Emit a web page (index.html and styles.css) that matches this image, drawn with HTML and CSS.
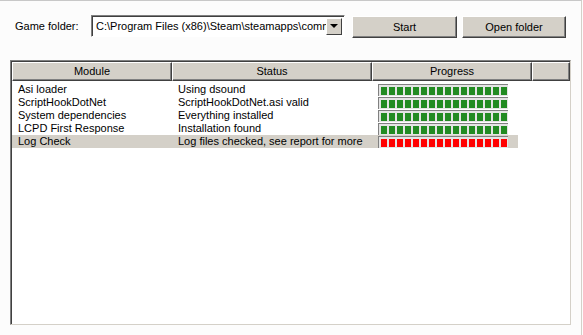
FILE: index.html
```html
<!DOCTYPE html>
<html lang="en">
<head>
    <meta charset="UTF-8">
    <title>Installer check</title>
    <link rel="stylesheet" href="styles.css">
</head>
<body>
    <div class="window">
        <div class="toolbar">
            <span class="label">Game folder:</span>
            <div class="combo">
                <span class="combo-text">C:\Program Files (x86)\Steam\steamapps\common</span>
                <span class="combo-btn"><span class="arrow"></span></span>
            </div>
            <button class="btn btn-start">Start</button>
            <button class="btn btn-open">Open folder</button>
        </div>

        <div class="listview">
            <div class="header">
                <div class="hcell">Module</div>
                <div class="hcell">Status</div>
                <div class="hcell">Progress</div>
                <div class="hcell"></div>
            </div>
            <div id="rows"></div>
        </div>
    </div>

<script>
// Lista de módulos verificados
var modules = [
    { name: 'Asi loader', status: 'Using dsound', ok: true },
    { name: 'ScriptHookDotNet', status: 'ScriptHookDotNet.asi valid', ok: true },
    { name: 'System dependencies', status: 'Everything installed', ok: true },
    { name: 'LCPD First Response', status: 'Installation found', ok: true },
    { name: 'Log Check', status: 'Log files checked, see report for more', ok: false }
];

function createBar(ok) {
    var bar = document.createElement('div');
    bar.className = 'bar';
    for (var i = 0; i < 16; i++) {
        var seg = document.createElement('span');
        seg.className = ok ? 'seg seg-green' : 'seg seg-red';
        bar.appendChild(seg);
    }
    return bar;
}

var rowsDiv = document.getElementById('rows');
modules.forEach(function (m) {
    var row = document.createElement('div');
    row.className = m.ok ? 'row' : 'row row-selected';
    var c1 = document.createElement('div');
    c1.className = 'cell';
    c1.textContent = m.name;
    var c2 = document.createElement('div');
    c2.className = 'cell';
    c2.textContent = m.status;
    var c3 = document.createElement('div');
    c3.className = 'cell cell-bar';
    c3.appendChild(createBar(m.ok));
    row.appendChild(c1);
    row.appendChild(c2);
    row.appendChild(c3);
    rowsDiv.appendChild(row);
});
</script>
</body>
</html>
```

FILE: styles.css
```css
body {
    margin: 0;
    background-color: #fcfcfc;
    font-family: "Liberation Sans", Arial, sans-serif;
    font-size: 11px;
    color: #000;
}
.window {
    width: 581px;
    height: 334px;
    border-top: 1px solid #c8c8c8;
    border-right: 1px solid #d4d0c8;
}
.toolbar {
    display: flex;
    align-items: center;
    height: 24px;
    padding: 13px 0 0 15px;
}
.label {
    width: 76px;
}
.combo {
    display: flex;
    align-items: center;
    box-sizing: border-box;
    width: 254px;
    height: 22px;
    border: 1px solid;
    border-color: #808080 #fff #fff #808080;
    box-shadow: inset 1px 1px 0 #404040;
    background-color: #fff;
    padding: 1px 2px 1px 2px;
}
.combo-text {
    flex: 1;
    overflow: hidden;
    white-space: nowrap;
    padding-left: 2px;
}
.combo-btn {
    display: flex;
    align-items: center;
    justify-content: center;
    box-sizing: border-box;
    width: 16px;
    height: 17px;
    background-color: #d4d0c8;
    border: 1px solid;
    border-color: #fff #404040 #404040 #fff;
}
.arrow {
    width: 0;
    height: 0;
    border-left: 4px solid transparent;
    border-right: 4px solid transparent;
    border-top: 4px solid #000;
}
.btn {
    box-sizing: border-box;
    height: 22px;
    background-color: #d4d0c8;
    border: 1px solid;
    border-color: #fff #404040 #404040 #fff;
    box-shadow: inset -1px -1px 0 #808080;
    font-family: "Liberation Sans", Arial, sans-serif;
    font-size: 11px;
    padding: 0;
    margin-top: 2px;
}
.btn-start {
    width: 105px;
    margin-left: 7px;
}
.btn-open {
    width: 104px;
    margin-left: 5px;
}
.listview {
    box-sizing: border-box;
    width: 561px;
    height: 265px;
    margin: 22px 0 0 10px;
    border: 1px solid;
    border-color: #808080 #d4d0c8 #d4d0c8 #808080;
    box-shadow: inset 1px 1px 0 #404040;
    background-color: #fff;
    padding: 1px 0 0 1px;
}
.header {
    display: grid;
    grid-template-columns: 160px 200px 160px 38px;
    height: 19px;
}
.hcell {
    box-sizing: border-box;
    background-color: #d4d0c8;
    border: 1px solid;
    border-color: #fff #404040 #404040 #fff;
    box-shadow: inset -1px -1px 0 #808080;
    text-align: center;
    line-height: 16px;
}
#rows {
    padding-top: 2px;
}
.row {
    display: grid;
    grid-template-columns: 160px 200px 146px;
    width: 506px;
    height: 13px;
}
.row-selected {
    background-color: #d4d0c8;
}
.cell {
    padding-left: 6px;
    line-height: 13px;
    white-space: nowrap;
}
.cell-bar {
    display: flex;
    align-items: center;
}
.bar {
    display: flex;
    gap: 2px;
    box-sizing: border-box;
    width: 130px;
    height: 12px;
    padding: 2px 0 1px 2px;
    background-color: #e4e4e4;
    border-top: 1px solid #808080;
    border-left: 1px solid #808080;
}
.seg {
    width: 6px;
    height: 8px;
}
.seg-green {
    background-color: #228b22;
}
.seg-red {
    background-color: #ff0000;
}
```
